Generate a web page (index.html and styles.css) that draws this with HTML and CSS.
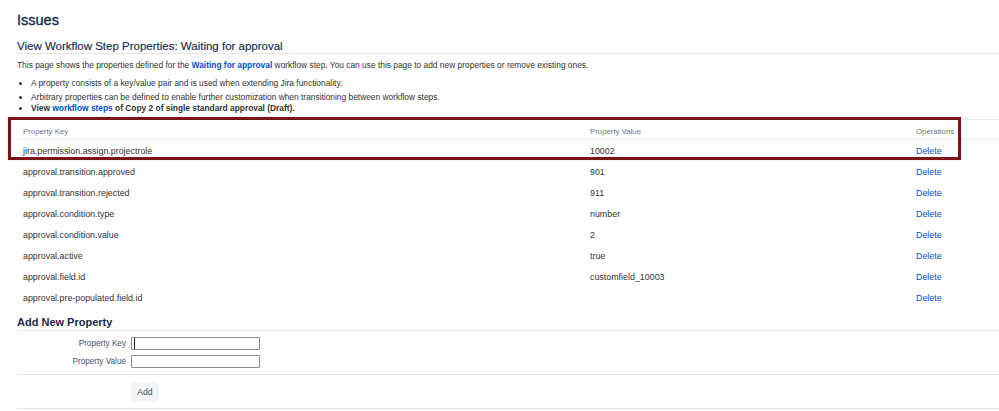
FILE: index.html
```html
<!DOCTYPE html>
<html>
<head>
<meta charset="utf-8">
<link rel="stylesheet" href="styles.css">
</head>
<body>
<div class="page">
  <h1 class="title">Issues</h1>
  <h2 class="subtitle">View Workflow Step Properties: Waiting for approval</h2>
  <p class="desc">This page shows the properties defined for the <a class="link strong">Waiting for approval</a> workflow step. You can use this page to add new properties or remove existing ones.</p>
  <ul class="notes">
    <li class="n1">A property consists of a key/value pair and is used when extending Jira functionality.</li>
    <li>Arbitrary properties can be defined to enable further customization when transitioning between workflow steps.</li>
    <li class="strong">View <a class="link">workflow steps</a> of Copy 2 of single standard approval (Draft).</li>
  </ul>
  <div class="table-wrap">
    <table class="props">
      <colgroup><col class="col-key"><col class="col-val"><col class="col-op"></colgroup>
      <thead>
        <tr><th>Property Key</th><th>Property Value</th><th>Operations</th></tr>
      </thead>
      <tbody>
        <tr><td>jira.permission.assign.projectrole</td><td>10002</td><td><a class="link del">Delete</a></td></tr>
        <tr><td>approval.transition.approved</td><td>901</td><td><a class="link del">Delete</a></td></tr>
        <tr><td>approval.transition.rejected</td><td>911</td><td><a class="link del">Delete</a></td></tr>
        <tr><td>approval.condition.type</td><td>number</td><td><a class="link del">Delete</a></td></tr>
        <tr><td>approval.condition.value</td><td>2</td><td><a class="link del">Delete</a></td></tr>
        <tr><td>approval.active</td><td>true</td><td><a class="link del">Delete</a></td></tr>
        <tr><td>approval.field.id</td><td>customfield_10003</td><td><a class="link del">Delete</a></td></tr>
        <tr><td>approval.pre-populated.field.id</td><td></td><td><a class="link del">Delete</a></td></tr>
      </tbody>
    </table>
    <div class="highlight"></div>
  </div>
  <h3 class="add-title">Add New Property</h3>
  <form class="add-form">
    <div class="fields">
      <div class="field"><label class="lbl">Property Key</label><input class="inp focus" type="text"></div>
      <div class="field"><label class="lbl">Property Value</label><input class="inp" type="text"></div>
    </div>
    <div class="buttons">
      <button class="btn" type="button">Add</button>
    </div>
  </form>
</div>
</body>
</html>
```

FILE: styles.css
```css
html, body {
  margin: 0;
  padding: 0;
  background: #fff;
}
body {
  font-family: "Liberation Sans", Arial, sans-serif;
  color: #172b4d;
  font-size: 8.4px;
}
.page {
  padding: 10px 0 0 17px;
}
.title {
  margin: 0;
  font-size: 14.5px;
  font-weight: normal;
  -webkit-text-stroke: 0.35px #172b4d;
  line-height: 20px;
  color: #172b4d;
}
.subtitle {
  margin: 9px 0 0;
  font-size: 11.5px;
  font-weight: normal;
  -webkit-text-stroke: 0.15px #172b4d;
  line-height: 14px;
  padding-bottom: 0;
  border-bottom: 1px solid #e5e5e5;
  color: #172b4d;
}
.desc {
  margin: 5px 0 0;
  line-height: 12px;
  color: #333;
}
.link {
  color: #0052cc;
  text-decoration: none;
}
.strong {
  font-weight: bold;
}
.notes {
  margin: 7px 0 0;
  padding-left: 14px;
  line-height: 11px;
  color: #333;
}
.notes .n1 {
  margin-bottom: 3px;
}
.table-wrap {
  position: relative;
  margin-top: 5px;
}
.props {
  width: 100%;
  table-layout: fixed;
  border-collapse: collapse;
  border-top: 1px solid #ebecf0;
  font-size: 8.9px;
  color: #333;
}
.col-key { width: 567px; }
.col-val { width: 326px; }
.props th {
  text-align: left;
  font-weight: normal;
  color: #6b778c;
  font-size: 7.8px;
  height: 15px;
  padding: 4px 6px 0;
  border-bottom: 1px solid #ebecf0;
}
.props td {
  height: 21px;
  padding: 0 6px;
  white-space: nowrap;
}
.del {
  color: #0052cc;
}
.highlight {
  position: absolute;
  left: -9px;
  top: -2px;
  width: 947px;
  height: 37px;
  border: 3px solid #7b1414;
  box-shadow: 0 0 1px rgba(123, 20, 20, 0.4);
  pointer-events: none;
}
.add-title {
  margin: 7px 0 0;
  font-size: 11px;
  font-weight: bold;
  line-height: 15px;
  padding-bottom: 0;
  border-bottom: 1px solid #e5e5e5;
  color: #172b4d;
}
.add-form {
  margin: 0;
}
.fields {
  padding: 6px 0 6px;
  border-bottom: 1px solid #e5e5e5;
  display: flex;
  flex-direction: column;
  gap: 5px;
}
.field {
  display: flex;
  align-items: center;
  gap: 5px;
}
.lbl {
  width: 109px;
  text-align: right;
  font-size: 8.2px;
  color: #42526e;
}
.inp {
  width: 129px;
  height: 13px;
  box-sizing: border-box;
  margin: 0;
  padding: 0 2px;
  border: 1px solid #8a8a8a;
  border-radius: 1px;
  background: #fff;
  font-size: 8px;
}
.focus {
  box-shadow: inset 2px 0 0 #fff, inset 3px 0 0 #222;
}
.buttons {
  padding: 7px 0 6px 114px;
  border-bottom: 1px solid #e5e5e5;
}
.btn {
  display: block;
  width: 28px;
  height: 20px;
  border: none;
  border-radius: 3px;
  background: #f4f5f7;
  color: #42526e;
  font-family: "Liberation Sans", Arial, sans-serif;
  font-size: 8.6px;
  padding: 0;
}
```
